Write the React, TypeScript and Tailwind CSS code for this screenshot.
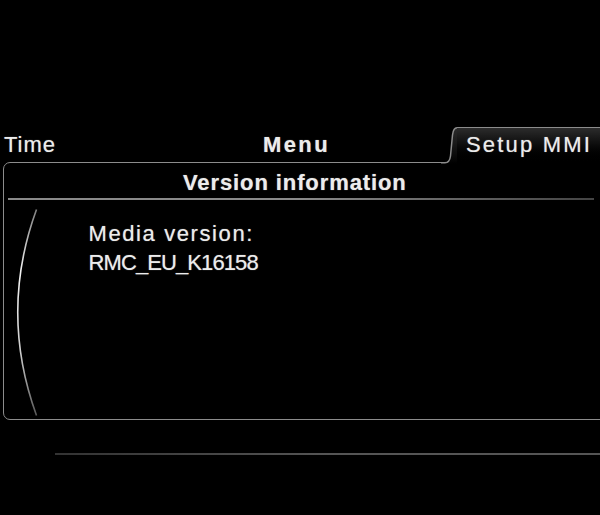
import React from "react";

export default function App() {
  return (
    <div className="w-[600px] h-[515px] bg-black overflow-hidden font-['Liberation_Sans',Arial,sans-serif] text-[#ececec] [text-shadow:0_0_1px_rgba(255,255,255,0.55)]">
      <div className="pt-[127px]">
        {/* top tabs */}
        <div className="relative z-10 flex h-[37px] -mb-[2px]">
          <div className="relative flex-1 pt-[7.2px] text-[22px] leading-none">
            <span className="pl-[4px] tracking-[1px]">Time</span>
            <span className="absolute left-[263px] top-[7.2px] font-bold tracking-[2.4px]">Menu</span>
          </div>
          <div className="flex w-[159px]">
            <svg width="16" height="37" viewBox="0 0 16 37" className="shrink-0">
              <defs>
                <linearGradient id="tabfill" x1="0" y1="0" x2="0" y2="1">
                  <stop offset="0" stopColor="#2c2c2c" />
                  <stop offset="1" stopColor="#000000" />
                </linearGradient>
              </defs>
              <path d="M4,37 L4,35.75 C8,35.75 9,33 9.5,29 L11.5,8 C12,3.5 13.5,0.75 16,0.75 L16,37 Z" fill="url(#tabfill)" />
              <path
                d="M0,35.75 L4,35.75 C8,35.75 9,33 9.5,29 L11.5,8 C12,3.5 13.5,0.75 16,0.75"
                fill="none"
                stroke="#8c8c8c"
                strokeWidth="1.5"
              />
            </svg>
            <div className="flex-1 border-t-[1.5px] border-[#8c8c8c] bg-gradient-to-b from-[#2c2c2c] to-black pl-[9px] pt-[5.5px] text-[22px] leading-none tracking-[2.2px] whitespace-nowrap">
              Setup MMI
            </div>
          </div>
        </div>

        {/* main panel */}
        <div className="ml-[3px] -mr-[10px] h-[258px] border-[1.5px] border-[#8c8c8c] rounded-l-[7px]">
          <div className="pt-[8.5px] pl-[179px] text-[22px] leading-none font-bold tracking-[0.9px]">
            Version information
          </div>
          <div className="mt-[4.5px] ml-[4px] w-[586px] h-[2px] bg-gradient-to-r from-[#8a8a8a] via-[#8a8a8a] to-[#444]" />
          <div className="flex">
            <svg width="40" height="220" viewBox="0 0 40 220" className="shrink-0">
              <defs>
                <linearGradient id="arc" x1="0" y1="0" x2="0" y2="1">
                  <stop offset="0" stopColor="#ffffff" stopOpacity="0.5" />
                  <stop offset="0.3" stopColor="#ffffff" stopOpacity="0.95" />
                  <stop offset="0.7" stopColor="#ffffff" stopOpacity="0.8" />
                  <stop offset="1" stopColor="#ffffff" stopOpacity="0.35" />
                </linearGradient>
              </defs>
              <path d="M32.5,9.5 Q-5,112 32.5,215.5" fill="none" stroke="url(#arc)" strokeWidth="1.6" />
            </svg>
            <div className="ml-[44.5px] mt-[18.5px] text-[22px] leading-[29px]">
              <div className="tracking-[1.6px]">Media version:</div>
              <div className="tracking-[-0.9px]">RMC_EU_K16158</div>
            </div>
          </div>
        </div>

        <div className="mt-[32.5px] ml-[55px] h-[2px] bg-gradient-to-r from-[#333] via-[#555] to-[#555]" />
      </div>
    </div>
  );
}
